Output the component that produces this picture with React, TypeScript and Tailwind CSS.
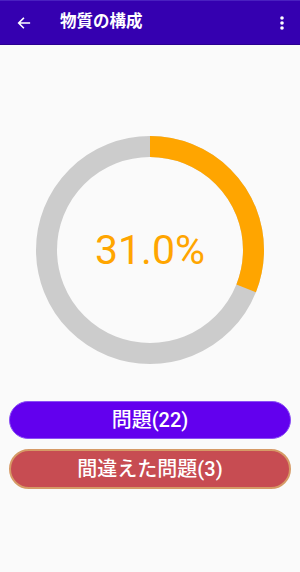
import React from "react";

export default function App() {
  const pct = 31.0;
  const r = 103.5;
  const c = 2 * Math.PI * r;
  return (
    <div
      className="w-[300px] h-[572px] bg-[#fafafa] flex flex-col"
      style={{ fontFamily: 'Roboto, "Noto Sans CJK JP", sans-serif' }}
    >
      <div className="h-[45px] bg-[#3500b0] border-t border-[#4a20c0] border-b border-b-[#2a0090] flex items-center shrink-0">
        <div className="w-[46px] flex justify-center pl-[2px]">
          <svg width="16" height="16" viewBox="0 0 24 24" fill="none" stroke="white" strokeWidth="2.4" strokeLinecap="square">
            <path d="M20 12H5M11 5l-7 7 7 7" />
          </svg>
        </div>
        <div className="ml-[14px] text-white text-[16.5px] font-bold">物質の構成</div>
        <div className="ml-auto w-[36px] flex justify-center">
          <svg width="4" height="14" viewBox="0 0 4 14">
            <circle cx="2" cy="2" r="1.8" fill="white" />
            <circle cx="2" cy="7" r="1.8" fill="white" />
            <circle cx="2" cy="12" r="1.8" fill="white" />
          </svg>
        </div>
      </div>
      <div className="flex justify-center pt-[91px]">
        <div className="relative w-[228px] h-[228px]">
          <svg width="228" height="228" viewBox="0 0 228 228">
            <circle cx="114" cy="114" r={r} fill="none" stroke="#cccccc" strokeWidth="21" />
            <circle
              cx="114"
              cy="114"
              r={r}
              fill="none"
              stroke="#ffa500"
              strokeWidth="21"
              strokeDasharray={`${(c * pct) / 100} ${c}`}
              transform="rotate(-90 114 114)"
            />
          </svg>
          <div className="absolute inset-0 flex items-center justify-center text-[#ffa500] text-[41px] pt-[2px]">
            31.0%
          </div>
        </div>
      </div>
      <div className="px-[9px] pt-[37px] flex flex-col gap-[10px]">
        <div className="h-[38px] rounded-full bg-[#6200ee] border border-[#8a50f5] flex items-center justify-center text-white text-[20px] font-medium">
          問題(22)
        </div>
        <div className="h-[40px] rounded-full bg-[#c74c52] border-2 border-[#d69a66] flex items-center justify-center text-white text-[20px] font-medium">
          間違えた問題(3)
        </div>
      </div>
    </div>
  );
}
